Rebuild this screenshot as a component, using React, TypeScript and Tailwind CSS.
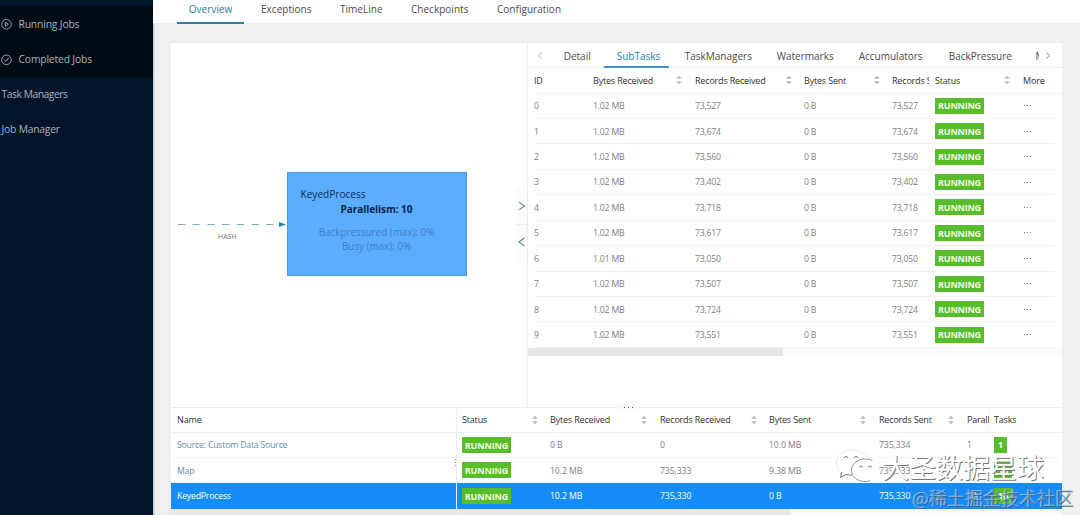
import React from 'react';

const navTabs = [
  { label: 'Exceptions', cls: 'w-[51px]' },
  { label: 'TimeLine', cls: 'w-[43px]' },
  { label: 'Checkpoints', cls: 'w-[58px]' },
  { label: 'Configuration', cls: 'w-[66px]' },
];

const detailTabs = [
  { label: 'Detail', cls: 'w-[54px] pl-[13px]', active: false },
  { label: 'SubTasks', cls: 'w-[65px] pl-[12px]', active: true },
  { label: 'TaskManagers', cls: 'w-[95px] pl-[15px]', active: false },
  { label: 'Watermarks', cls: 'w-[80px] pl-[12px]', active: false },
  { label: 'Accumulators', cls: 'w-[90px] pl-[14px]', active: false },
  { label: 'BackPressure', cls: 'w-[88px] pl-[14px]', active: false },
];

const records = ['73,527', '73,674', '73,560', '73,402', '73,718', '73,617', '73,050', '73,507', '73,724', '73,551'];

function Sort() {
  return (
    <svg className="h-[10px] w-[6px] shrink-0" viewBox="0 0 6 10" fill="#bfbfbf">
      <path d="M3 0.6 5.8 4H.2zM3 9.4.2 6h5.6z" />
    </svg>
  );
}

function Head({ label, cls, sort = true }: { label: string; cls: string; sort?: boolean }) {
  return (
    <div className={`flex shrink-0 items-center justify-between overflow-hidden whitespace-nowrap ${cls}`}>
      <span>{label}</span>
      {sort && <Sort />}
    </div>
  );
}

function Running() {
  return (
    <span className="flex h-[16px] w-[49px] items-center justify-center bg-[#58bd2b] pt-px text-[9px] font-bold text-[#effbe8]">
      RUNNING
    </span>
  );
}

function SubTasks() {
  return (
    <div className="pl-[6px] text-[8.7px]">
      <div className="flex h-[25.5px] w-[527px] items-center border-b border-[#f1f1f1] text-[9px] font-medium tracking-[-0.18px] text-[#303030]">
        <Head label="ID" cls="w-[59px]" sort={false} />
        <Head label="Bytes Received" cls="w-[89px]" />
        <Head label="Records Received" cls="ml-[13px] w-[97px]" />
        <Head label="Bytes Sent" cls="ml-[12px] w-[76px]" />
        <Head label="Records Sent" cls="ml-[12px] w-[37px]" sort={false} />
        <Head label="Status" cls="ml-[6px] w-[75px]" />
        <Head label="More" cls="ml-[13px] w-[30px]" sort={false} />
      </div>
      {records.map((value, i) => (
        <div key={value} className="flex h-[25.45px] w-[521px] items-center border-b border-[#f1f1f1] tracking-[-0.2px] text-[#808080]">
          <span className="w-[59px] pt-[1.8px]">{i}</span>
          <span className="w-[102px] pt-[1.8px]">{i === 6 ? '1.01 MB' : '1.02 MB'}</span>
          <span className="w-[109px] pt-[1.8px]">{value}</span>
          <span className="w-[88px] pt-[1.8px]">0 B</span>
          <span className="w-[43px] pt-[1.8px]">{value}</span>
          <Running />
          <span className="ml-[40px] flex gap-[2px]">
            <i className="size-px bg-[#777]" />
            <i className="size-px bg-[#777]" />
            <i className="size-px bg-[#777]" />
          </span>
        </div>
      ))}
      <div className="ml-[-6px] h-[8px] w-[534px] bg-[#fafafa]">
        <div className="h-full w-[255px] bg-[#e6e6e6]" />
      </div>
    </div>
  );
}

const vertices = [
  { name: 'Source: Custom Data Source', br: '0 B', rr: '0', bs: '10.0 MB', rs: '735,334', p: '1' },
  { name: 'Map', br: '10.2 MB', rr: '735,333', bs: '9.38 MB', rs: '735,333', p: '10' },
  { name: 'KeyedProcess', br: '10.2 MB', rr: '735,330', bs: '0 B', rs: '735,330', p: '10' },
];

function Vertices() {
  return (
    <div className="relative flex h-[108px] border-t border-[#ececec] text-[8.7px]">
      <div className="w-[286px] border-r border-[#efefef]">
        <div className="flex h-[24.7px] items-center border-b border-[#f1f1f1] pl-[6px] text-[9px] font-medium tracking-[-0.1px] text-[#303030]">Name</div>
        {vertices.map((v, i) => (
          <div key={v.name} className={`flex h-[25.4px] items-center pl-[6px] pt-[1.5px] tracking-[-0.19px] ${i === 2 ? 'bg-[#168cfa] text-white' : 'border-b border-[#f4f4f4] text-[#5f8eac]'}`}>
            {v.name}
          </div>
        ))}
        <div className="h-[7px] bg-[#e9e9e9]" />
      </div>
      <div className="w-[605px] overflow-hidden">
        <div className="flex h-[24.7px] items-center border-b border-[#f1f1f1] pl-[5px] text-[9px] font-medium tracking-[-0.18px] text-[#303030]">
          <Head label="Status" cls="w-[76px]" />
          <Head label="Bytes Received" cls="ml-[12px] w-[97px]" />
          <Head label="Records Received" cls="ml-[13px] w-[97px]" />
          <Head label="Bytes Sent" cls="ml-[12px] w-[97px]" />
          <Head label="Records Sent" cls="ml-[13px] w-[75px]" />
          <Head label="Parallelism" cls="ml-[13px] w-[21.5px]" sort={false} />
          <div className="flex h-full items-center border-l border-[#f3f3f3] pl-[4.5px]">Tasks</div>
        </div>
        {vertices.map((v, i) => (
          <div key={v.name} className={`flex h-[25.4px] items-center pl-[5px] tracking-[-0.1px] ${i === 2 ? 'bg-[#168cfa] text-white' : 'border-b border-[#f4f4f4] text-[#808080]'}`}>
            <Running />
            <span className="ml-[39px] w-[110px] pt-[1.5px]">{v.br}</span>
            <span className="w-[109px] pt-[1.5px]">{v.rr}</span>
            <span className="w-[110px] pt-[1.5px]">{v.bs}</span>
            <span className="w-[88px] pt-[1.5px]">{v.rs}</span>
            <span className="w-[27px] pt-[1.5px]">{v.p}</span>
            <span className={`flex h-[16px] items-center justify-center bg-[#58bd2b] text-[9px] font-bold text-white ${i ? 'w-[18px]' : 'w-[13px]'}`}>{v.p}</span>
          </div>
        ))}
        <div className="h-[7px] bg-[#fafafa]">
          <div className="h-full w-[334px] bg-[#e9e9e9]" />
        </div>
      </div>
      <div className="absolute left-[446px] top-[-5px] flex h-[9px] w-[22px] items-center justify-center gap-[3px] bg-[#fafafa]">
        <i className="size-px bg-[#555]" />
        <i className="size-px bg-[#555]" />
        <i className="size-px bg-[#555]" />
      </div>
      <div className="absolute left-[284px] top-[51px] flex w-[2px] flex-col gap-[2px]">
        <i className="size-px bg-[#888]" />
        <i className="size-px bg-[#888]" />
        <i className="size-px bg-[#888]" />
      </div>
    </div>
  );
}

function Graph() {
  return (
    <div className="relative w-[356px] shrink-0">
      <svg className="absolute left-[7px] top-[176px] h-[10px] w-[109px]" viewBox="0 0 109 10">
        <path d="M0 5.5h101" stroke="#7fb0c0" strokeDasharray="7.5 7.2" />
        <path d="M101 3l7 2.5-7 2.5z" fill="#2684a8" />
      </svg>
      <span className="absolute left-[47px] top-[188px] text-[6.8px] leading-[11px] tracking-[0.15px] text-[#707070]">HASH</span>
      <div className="absolute left-[115.5px] top-[129px] flex h-[104px] w-[180px] flex-col border border-[#469be9] bg-[#5cadff] text-[#0c3054]">
        <span className="ml-[13px] mt-[14px] text-[10.1px] leading-[15px]">KeyedProcess</span>
        <span className="text-center text-[10px] font-bold leading-[14px] tracking-[-0.05px] text-[#04254a]">Parallelism: 10</span>
        <span className="mt-[9px] text-center text-[9.9px] leading-[14px] text-[#3b7fbf]">Backpressured (max): 0%</span>
        <span className="text-center text-[9.9px] leading-[14px] text-[#3b7fbf]">Busy (max): 0%</span>
      </div>
      <div className="absolute left-[345px] top-[146px] flex h-[75px] w-[11px] flex-col bg-[#fafcfc]">
        <svg className="h-[36px] w-[11px] border-b border-[#eeeeee]" viewBox="0 0 11 36" fill="none" stroke="#5f8f99" strokeWidth="1.2"><path d="M3 13.5l5.5 4-5.5 4" /></svg>
        <svg className="h-[38px] w-[11px]" viewBox="0 0 11 38" fill="none" stroke="#5f8f99" strokeWidth="1.2"><path d="M8.5 13l-5.5 4 5.5 4" /></svg>
      </div>
    </div>
  );
}

function Watermark() {
  return (
    <>
      <svg className="absolute left-[834px] top-[448px] h-[37px] w-[46px]" viewBox="0 0 46 37" fill="none" strokeLinecap="round">
        <path d="M17 2C8 2 2 7.5 2 15c0 4.5 2.2 8 5.5 10.2L6 29l6-2.5c2 .7 4 .8 6 .7h17V12C32 6 25 2 17 2z" fill="#fff" fillOpacity=".9" />
        <path d="M33 9C30.5 4.5 24.5 2 17.5 2 9 2 2.500 7.5 2.500 15c0 4.5 1.700 7.500 5 9.700" stroke="#e2e2e2" strokeWidth=".8" />
        <path d="M7.5 24.7 6.5 29.5 12 26.5c2 .6 4 .7 5.8.5" stroke="#777" />
        <path d="M31 11c-8 0-13.5 5-13.5 11.300S23 33.500 31 33.500c1.600 0 3.200-.2 4.600-.7L41 35.500l-1.500-4.400c3-2 4.700-5.200 4.700-8.800C44.200 16 38.500 11 31 11z" fill="#fff" fillOpacity=".7" />
        <path d="M38 12.500c-2-1-4.500-1.500-7-1.500-8 0-13.500 5-13.500 11.300S23 33.500 31 33.500c1.600 0 3.200-.2 4.600-.7" stroke="#888" strokeWidth=".9" />
        <path d="M10 9.500q2-2.500 4 0m6 0q2-2.500 4 0M25.500 19q1.700-2.400 3.400 0m5.300 0q1.700-2.400 3.400 0" stroke="#666" strokeWidth=".9" />
      </svg>
      <span className="absolute left-[882px] top-[447px] whitespace-nowrap font-['Noto_Sans_CJK_SC',sans-serif] text-[27px] leading-[40px] text-white [text-shadow:1px_1px_0_#777]">大圣数据星球</span>
      <span className="absolute left-[912px] top-[484px] whitespace-nowrap font-['Noto_Sans_CJK_SC',sans-serif] text-[18px] leading-[27px] text-[#9db8d0]/50 [text-shadow:1px_1px_0_rgba(60,85,110,0.75),-0.5px_-0.5px_0_rgba(255,255,255,0.4)]">@稀土掘金技术社区</span>
    </>
  );
}

export default function App() {
  return (
    <div className="relative flex h-[515px] w-[1080px] overflow-hidden bg-[#f0f0f0] font-['Open_Sans','Noto_Sans',sans-serif]">
      <aside className="w-[153px] shrink-0 bg-[#001529] text-[10.3px] tracking-[-0.15px] text-[#a9b3bc]">
        <div className="mt-[6px] h-[71px] bg-[#000b15]">
          <div className="flex h-[37px] items-center">
            <svg className="h-[11px] w-[12px]" viewBox="0 0 12 11" fill="none" stroke="#a9b3bc" strokeWidth=".9"><circle cx="6.5" cy="5.3" r="4.8" /><path d="M5.3 3.3v4l3-2z" /></svg>
            <span className="ml-[6.5px] pt-px">Running Jobs</span>
          </div>
          <div className="flex h-[32px] items-center">
            <svg className="h-[11px] w-[12px]" viewBox="0 0 12 11" fill="none" stroke="#a9b3bc" strokeWidth=".9"><circle cx="6.5" cy="5.8" r="4.8" /><path d="M4.3 5.7l1.6 1.8L8.8 3.9" /></svg>
            <span className="ml-[6.5px] pt-px">Completed Jobs</span>
          </div>
        </div>
        <div className="flex h-[35px] items-center pl-[1.5px] tracking-[-0.45px]">Task Managers</div>
        <div className="flex h-[35px] items-center pl-[1.5px] tracking-[-0.2px]">Job Manager</div>
      </aside>
      <main className="w-[927px] shadow-[inset_2px_0_2px_-1px_#a9bfcc]">
        <nav className="flex h-[23px] gap-[28px] bg-white pl-[24px] text-[10px] text-[#4c4c4c]">
          <div className="mr-[-11px] flex h-[24px] w-[67px] justify-center border-b-2 border-[#2f7fae] pt-[1.5px] leading-[15px] text-[#1b7fab]">Overview</div>
          {navTabs.map((t) => (
            <span key={t.label} className={`mt-[1.5px] whitespace-nowrap leading-[15px] tracking-[0.02px] ${t.cls}`}>{t.label}</span>
          ))}
        </nav>
        <section className="ml-[18px] mt-[19px] w-[891px] bg-white">
          <div className="flex h-[365px] border-t border-[#ebebeb]">
            <Graph />
            <div className="w-[535px] border-l border-[#ededed]">
              <div className="flex h-[25px] items-center border-b border-[#f0f0f0] text-[10px] text-[#4a4a4a]">
                <svg className="w-[22px] shrink-0" height="10" viewBox="0 0 22 10" fill="none" stroke="#c4c4c4"><path d="M14 2.5l-4 3 4 3" /></svg>
                {detailTabs.map((t) => (
                  <div key={t.label} className={`flex h-[26px] shrink-0 items-center whitespace-nowrap border-b-2 pt-[4px] ${t.cls} ${t.active ? 'border-[#3b91cf] text-[#1684bd]' : 'border-transparent'}`}><span className="ml-[0.7px]">{t.label}</span></div>
                ))}
                <span className="ml-[13.5px] w-[3px] overflow-hidden pt-[2px]">Metrics</span>
                <svg className="ml-[6.5px] w-[6px]" height="10" viewBox="0 0 6 10" fill="none" stroke="#999"><path d="M1 2.5l4 3-4 3" /></svg>
              </div>
              <SubTasks />
            </div>
          </div>
          <Vertices />
        </section>
      </main>
      <Watermark />
    </div>
  );
}
